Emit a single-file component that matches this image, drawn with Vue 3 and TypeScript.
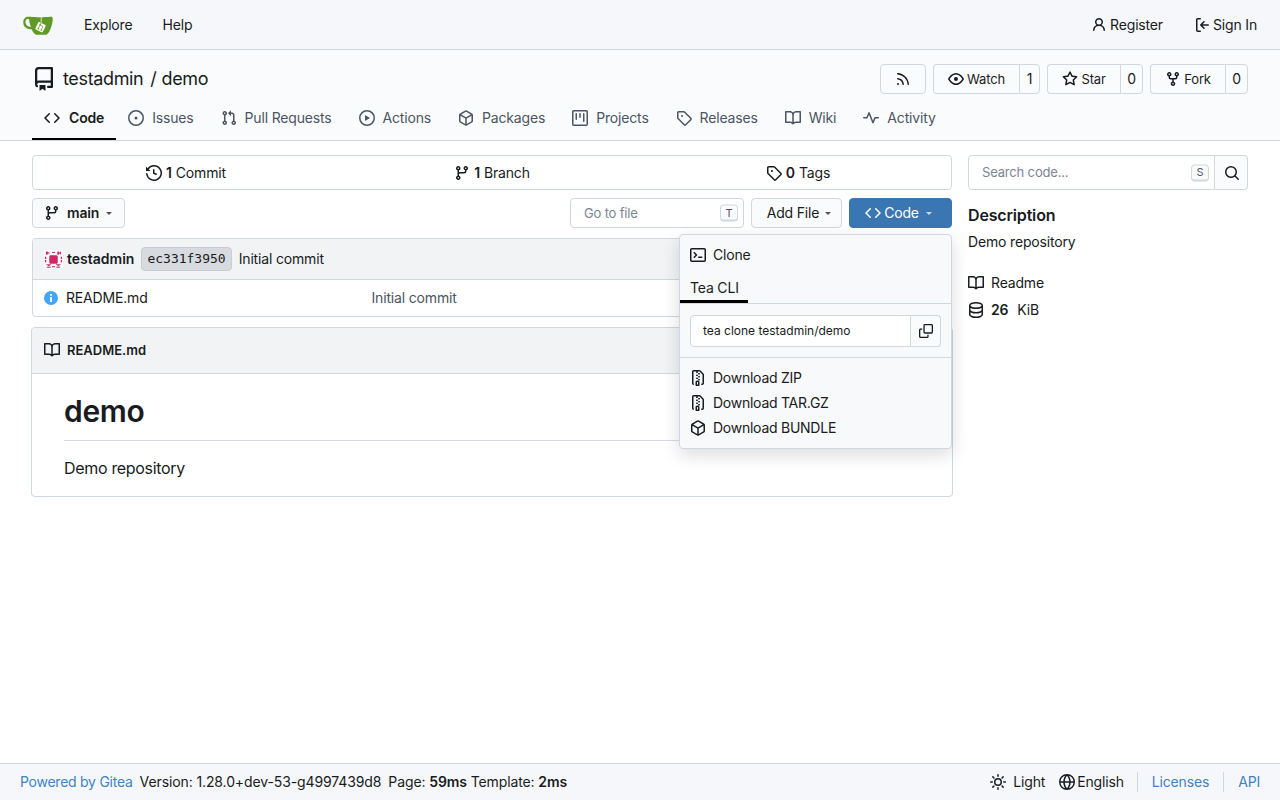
<script setup lang="ts">
import { h } from 'vue';

const icons: Record<string, string> = {
  code: 'm11.28 3.22 4.25 4.25a.75.75 0 0 1 0 1.06l-4.25 4.25a.749.749 0 0 1-1.275-.326.749.749 0 0 1 .215-.734L13.94 8l-3.72-3.72a.749.749 0 0 1 .326-1.275.749.749 0 0 1 .734.215Zm-6.56 0a.751.751 0 0 1 1.042.018.751.751 0 0 1 .018 1.042L2.06 8l3.72 3.72a.749.749 0 0 1-.326 1.275.749.749 0 0 1-.734-.215L.47 8.53a.75.75 0 0 1 0-1.06Z',
  repo: 'M2 2.5A2.5 2.5 0 0 1 4.5 0h8.75a.75.75 0 0 1 .75.75v12.5a.75.75 0 0 1-.75.75h-2.5a.75.75 0 0 1 0-1.5h1.75v-2h-8a1 1 0 0 0-.714 1.7.75.75 0 1 1-1.072 1.05A2.495 2.495 0 0 1 2 11.5Zm10.5-1h-8a1 1 0 0 0-1 1v6.708A2.486 2.486 0 0 1 4.5 9h8ZM5 12.25a.25.25 0 0 1 .25-.25h3.5a.25.25 0 0 1 .25.25v3.25a.25.25 0 0 1-.4.2l-1.45-1.087a.249.249 0 0 0-.3 0L5.4 15.7a.25.25 0 0 1-.4-.2Z',
  issue: 'M8 9.5a1.5 1.5 0 1 0 0-3 1.5 1.5 0 0 0 0 3Z M8 0a8 8 0 1 1 0 16A8 8 0 0 1 8 0ZM1.5 8a6.5 6.5 0 1 0 13 0 6.5 6.5 0 0 0-13 0Z',
  pull: 'M1.5 3.25a2.25 2.25 0 1 1 3 2.122v5.256a2.251 2.251 0 1 1-1.5 0V5.372A2.25 2.25 0 0 1 1.5 3.25Zm5.677-.177L9.573.677A.25.25 0 0 1 10 .854V2.5h1A2.5 2.5 0 0 1 13.5 5v5.628a2.251 2.251 0 1 1-1.5 0V5a1 1 0 0 0-1-1h-1v1.646a.25.25 0 0 1-.427.177L7.177 3.427a.25.25 0 0 1 0-.354ZM3.75 2.5a.75.75 0 1 0 0 1.5.75.75 0 0 0 0-1.5Zm0 9.5a.75.75 0 1 0 0 1.5.75.75 0 0 0 0-1.5Zm8.25.75a.75.75 0 1 0 1.5 0 .75.75 0 0 0-1.5 0Z',
  play: 'M8 0a8 8 0 1 1 0 16A8 8 0 0 1 8 0ZM1.5 8a6.5 6.5 0 1 0 13 0 6.5 6.5 0 0 0-13 0Zm4.879-2.773 4.264 2.559a.25.25 0 0 1 0 .428l-4.264 2.559A.25.25 0 0 1 6 10.559V5.442a.25.25 0 0 1 .379-.215Z',
  package: 'm8.878.392 5.25 3.045c.54.314.872.89.872 1.514v6.098a1.75 1.75 0 0 1-.872 1.514l-5.25 3.045a1.75 1.75 0 0 1-1.756 0l-5.25-3.045A1.75 1.75 0 0 1 1 11.049V4.951c0-.624.332-1.201.872-1.514L7.122.392a1.75 1.75 0 0 1 1.756 0ZM7.875 1.69l-4.63 2.685L8 7.133l4.755-2.758-4.63-2.685a.248.248 0 0 0-.25 0ZM2.5 5.677v5.372c0 .09.047.171.125.216l4.625 2.683V8.432Zm6.25 8.271 4.625-2.683a.25.25 0 0 0 .125-.216V5.677L8.75 8.432Z',
  project: 'M0 1.75C0 .784.784 0 1.75 0h12.5C15.216 0 16 .784 16 1.75v12.5A1.75 1.75 0 0 1 14.25 16H1.75A1.75 1.75 0 0 1 0 14.25ZM1.5 1.75v12.5c0 .138.112.25.25.25h12.5a.25.25 0 0 0 .25-.25V1.75a.25.25 0 0 0-.25-.25H1.75a.25.25 0 0 0-.25.25ZM11.75 3a.75.75 0 0 1 .75.75v7.5a.75.75 0 0 1-1.5 0v-7.5a.75.75 0 0 1 .75-.75Zm-8.25.75a.75.75 0 0 1 1.5 0v5.5a.75.75 0 0 1-1.5 0ZM8 3a.75.75 0 0 1 .75.75v3.5a.75.75 0 0 1-1.5 0v-3.5A.75.75 0 0 1 8 3Z',
  tag: 'M1 7.775V2.75C1 1.784 1.784 1 2.75 1h5.025c.464 0 .91.184 1.238.513l6.25 6.25a1.75 1.75 0 0 1 0 2.474l-5.026 5.026a1.75 1.75 0 0 1-2.474 0l-6.25-6.25A1.752 1.752 0 0 1 1 7.775Zm1.5 0c0 .066.026.13.073.177l6.25 6.25a.25.25 0 0 0 .354 0l5.025-5.025a.25.25 0 0 0 0-.354l-6.25-6.25a.25.25 0 0 0-.177-.073H2.75a.25.25 0 0 0-.25.25ZM6 5a1 1 0 1 1 0 2 1 1 0 0 1 0-2Z',
  book: 'M0 1.75A.75.75 0 0 1 .75 1h4.253c1.227 0 2.317.59 3 1.501A3.743 3.743 0 0 1 11.006 1h4.245a.75.75 0 0 1 .75.75v10.5a.75.75 0 0 1-.75.75h-4.507a2.25 2.25 0 0 0-1.591.659l-.622.621a.75.75 0 0 1-1.06 0l-.622-.621A2.25 2.25 0 0 0 5.258 13H.75a.75.75 0 0 1-.75-.75Zm7.251 10.324.004-5.073-.002-2.253A2.25 2.25 0 0 0 5.003 2.5H1.5v9h3.757a3.75 3.75 0 0 1 1.994.574ZM8.755 4.75l-.004 7.322a3.752 3.752 0 0 1 1.992-.572H14.5v-9h-3.495a2.25 2.25 0 0 0-2.25 2.25Z',
  pulse: 'M6 2c.306 0 .582.187.696.471L10 10.731l1.304-3.26A.751.751 0 0 1 12 7h3.25a.75.75 0 0 1 0 1.5h-2.742l-1.812 4.528a.751.751 0 0 1-1.392 0L6 4.77 4.696 8.03A.75.75 0 0 1 4 8.5H.75a.75.75 0 0 1 0-1.5h2.742l1.812-4.529A.751.751 0 0 1 6 2Z',
  rss: 'M2.002 2.725a.75.75 0 0 1 .797-.699C8.79 2.42 13.58 7.21 13.974 13.201a.75.75 0 0 1-1.497.098 10.502 10.502 0 0 0-9.776-9.776.747.747 0 0 1-.7-.798ZM2.84 7.05h-.002a7.002 7.002 0 0 1 6.113 6.111.75.75 0 0 1-1.49.178 5.503 5.503 0 0 0-4.8-4.8.75.75 0 0 1 .179-1.489ZM2 13a1 1 0 1 1 2 0 1 1 0 0 1-2 0Z',
  eye: 'M8 2c1.981 0 3.671.992 4.933 2.078 1.27 1.091 2.187 2.345 2.637 3.023a1.62 1.62 0 0 1 0 1.798c-.45.678-1.367 1.932-2.637 3.023C11.67 13.008 9.981 14 8 14c-1.981 0-3.671-.992-4.933-2.078C1.797 10.83.88 9.576.43 8.898a1.62 1.62 0 0 1 0-1.798c.45-.677 1.367-1.931 2.637-3.022C4.33 2.992 6.019 2 8 2ZM1.679 7.932a.12.12 0 0 0 0 .136c.411.622 1.241 1.75 2.366 2.717C5.176 11.758 6.527 12.5 8 12.5c1.473 0 2.825-.742 3.955-1.715 1.124-.967 1.954-2.096 2.366-2.717a.12.12 0 0 0 0-.136c-.412-.621-1.242-1.75-2.366-2.717C10.824 4.242 9.473 3.5 8 3.5c-1.473 0-2.825.742-3.955 1.715-1.124.967-1.954 2.096-2.366 2.717ZM8 10a2 2 0 1 1-.001-3.999A2 2 0 0 1 8 10Z',
  star: 'M8 .25a.75.75 0 0 1 .673.418l1.882 3.815 4.21.612a.75.75 0 0 1 .416 1.279l-3.046 2.97.719 4.192a.751.751 0 0 1-1.088.791L8 12.347l-3.766 1.98a.75.75 0 0 1-1.088-.79l.72-4.194L.818 6.374a.75.75 0 0 1 .416-1.28l4.21-.611L7.327.668A.75.75 0 0 1 8 .25Zm0 2.445L6.615 5.5a.75.75 0 0 1-.564.41l-3.097.45 2.24 2.184a.75.75 0 0 1 .216.664l-.528 3.084 2.769-1.456a.75.75 0 0 1 .698 0l2.77 1.456-.53-3.084a.75.75 0 0 1 .216-.664l2.24-2.183-3.096-.45a.75.75 0 0 1-.564-.41L8 2.694Z',
  fork: 'M5 5.372v.878c0 .414.336.75.75.75h4.5a.75.75 0 0 0 .75-.75v-.878a2.25 2.25 0 1 1 1.5 0v.878a2.25 2.25 0 0 1-2.25 2.25h-1.5v2.128a2.251 2.251 0 1 1-1.5 0V8.5h-1.5A2.25 2.25 0 0 1 3.5 6.25v-.878a2.25 2.25 0 1 1 1.5 0ZM5 3.25a.75.75 0 1 0-1.5 0 .75.75 0 0 0 1.5 0Zm6.75.75a.75.75 0 1 0 0-1.5.75.75 0 0 0 0 1.5Zm-3 8.75a.75.75 0 1 0-1.5 0 .75.75 0 0 0 1.5 0Z',
  person: 'M10.561 8.073a6.005 6.005 0 0 1 3.432 5.142.75.75 0 1 1-1.498.07 4.5 4.5 0 0 0-8.99 0 .75.75 0 0 1-1.498-.07 6.004 6.004 0 0 1 3.431-5.142 3.999 3.999 0 1 1 5.123 0ZM10.5 5a2.5 2.5 0 1 0-5 0 2.5 2.5 0 0 0 5 0Z',
  signin: 'M2 2.75C2 1.784 2.784 1 3.75 1h2.5a.75.75 0 0 1 0 1.5h-2.5a.25.25 0 0 0-.25.25v10.5c0 .138.112.25.25.25h2.5a.75.75 0 0 1 0 1.5h-2.5A1.75 1.75 0 0 1 2 13.25Zm6.56 4.5h5.69a.75.75 0 0 1 0 1.5H8.56l1.97 1.97a.749.749 0 0 1-.326 1.275.749.749 0 0 1-.734-.215L6.22 8.53a.75.75 0 0 1 0-1.06l3.25-3.25a.749.749 0 0 1 1.275.326.749.749 0 0 1-.215.734Z',
  history: 'm.427 1.927 1.215 1.215a8.002 8.002 0 1 1-1.6 5.685.75.75 0 1 1 1.493-.154 6.5 6.5 0 1 0 1.18-4.458l1.358 1.358A.25.25 0 0 1 3.896 6H.25A.25.25 0 0 1 0 5.75V2.104a.25.25 0 0 1 .427-.177ZM7.75 4a.75.75 0 0 1 .75.75v2.992l2.028.812a.75.75 0 0 1-.557 1.392l-2.5-1A.751.751 0 0 1 7 8.25v-3.5A.75.75 0 0 1 7.75 4Z',
  branch: 'M9.5 3.25a2.25 2.25 0 1 1 3 2.122V6A2.5 2.5 0 0 1 10 8.5H6a1 1 0 0 0-1 1v1.128a2.251 2.251 0 1 1-1.5 0V5.372a2.25 2.25 0 1 1 1.5 0v1.836A2.493 2.493 0 0 1 6 7h4a1 1 0 0 0 1-1v-.628A2.25 2.25 0 0 1 9.5 3.25Zm-6 0a.75.75 0 1 0 1.5 0 .75.75 0 0 0-1.5 0Zm8.25-.75a.75.75 0 1 0 0 1.5.75.75 0 0 0 0-1.5ZM4.25 12a.75.75 0 1 0 0 1.5.75.75 0 0 0 0-1.5Z',
  terminal: 'M0 2.75C0 1.784.784 1 1.75 1h12.5c.966 0 1.75.784 1.75 1.75v10.5A1.75 1.75 0 0 1 14.25 15H1.75A1.75 1.75 0 0 1 0 13.25Zm1.75-.25a.25.25 0 0 0-.25.25v10.5c0 .138.112.25.25.25h12.5a.25.25 0 0 0 .25-.25V2.75a.25.25 0 0 0-.25-.25ZM7.25 8a.749.749 0 0 1-.22.53l-2.25 2.25a.749.749 0 0 1-1.275-.326.749.749 0 0 1 .215-.734L5.44 8 3.72 6.28a.749.749 0 0 1 .326-1.275.749.749 0 0 1 .734.215l2.25 2.25c.141.14.22.331.22.53Zm1.5 1.5h3a.75.75 0 0 1 0 1.5h-3a.75.75 0 0 1 0-1.5Z',
  copy: 'M0 6.75C0 5.784.784 5 1.75 5h1.5a.75.75 0 0 1 0 1.5h-1.5a.25.25 0 0 0-.25.25v7.5c0 .138.112.25.25.25h7.5a.25.25 0 0 0 .25-.25v-1.5a.75.75 0 0 1 1.5 0v1.5A1.75 1.75 0 0 1 9.25 16h-7.5A1.75 1.75 0 0 1 0 14.25Z M5 1.75C5 .784 5.784 0 6.75 0h7.5C15.216 0 16 .784 16 1.75v7.5A1.75 1.75 0 0 1 14.25 11h-7.5A1.75 1.75 0 0 1 5 9.25Zm1.75-.25a.25.25 0 0 0-.25.25v7.5c0 .138.112.25.25.25h7.5a.25.25 0 0 0 .25-.25v-7.5a.25.25 0 0 0-.25-.25Z',
  zip: 'M3.5 1.75v11.5c0 .09.048.173.126.217a.75.75 0 0 1-.752 1.298A1.748 1.748 0 0 1 2 13.25V1.75C2 .784 2.784 0 3.75 0h5.586c.464 0 .909.185 1.237.513l2.914 2.914c.329.328.513.773.513 1.237v8.586A1.75 1.75 0 0 1 12.25 15h-.5a.75.75 0 0 1 0-1.5h.5a.25.25 0 0 0 .25-.25V4.664a.25.25 0 0 0-.073-.177L9.513 1.573a.25.25 0 0 0-.177-.073H7.25a.75.75 0 0 1 0 1.5h-.5a.75.75 0 0 1 0-1.5h-3a.25.25 0 0 0-.25.25Zm3.75 8.75h.5c.966 0 1.75.784 1.75 1.75v3a.75.75 0 0 1-.75.75h-2.5a.75.75 0 0 1-.75-.75v-3c0-.966.784-1.75 1.75-1.75ZM6 5.25a.75.75 0 0 1 .75-.75h.5a.75.75 0 0 1 0 1.5h-.5A.75.75 0 0 1 6 5.25Zm.75 2.25h.5a.75.75 0 0 1 0 1.5h-.5a.75.75 0 0 1 0-1.5ZM8 6.75A.75.75 0 0 1 8.75 6h.5a.75.75 0 0 1 0 1.5h-.5A.75.75 0 0 1 8 6.75ZM8.75 3h.5a.75.75 0 0 1 0 1.5h-.5a.75.75 0 0 1 0-1.5ZM8 9.75A.75.75 0 0 1 8.75 9h.5a.75.75 0 0 1 0 1.5h-.5A.75.75 0 0 1 8 9.75Zm-1 2.5v2.25h1v-2.25a.25.25 0 0 0-.25-.25h-.5a.25.25 0 0 0-.25.25Z',
  search: 'M10.68 11.74a6 6 0 0 1-7.922-8.982 6 6 0 0 1 8.982 7.922l3.04 3.04a.749.749 0 0 1-.326 1.275.749.749 0 0 1-.734-.215ZM11.5 7a4.499 4.499 0 1 0-8.997 0A4.499 4.499 0 0 0 11.5 7Z',
  database: 'M1 3.5c0-.626.292-1.165.7-1.59.406-.422.956-.767 1.579-1.041C4.525.32 6.195 0 8 0c1.805 0 3.475.32 4.722.869.622.274 1.172.62 1.578 1.04.408.426.7.965.7 1.591v9c0 .626-.292 1.165-.7 1.59-.406.422-.956.767-1.579 1.041C11.476 15.68 9.806 16 8 16c-1.805 0-3.475-.32-4.721-.869-.623-.274-1.173-.62-1.579-1.04-.408-.426-.7-.965-.7-1.591Zm1.5 0c0 .133.058.318.282.551.227.237.591.483 1.101.707C4.898 5.205 6.353 5.5 8 5.5c1.646 0 3.101-.295 4.118-.742.508-.224.873-.471 1.1-.708.224-.232.282-.417.282-.55 0-.133-.058-.318-.282-.551-.227-.237-.591-.483-1.101-.707C11.102 1.795 9.647 1.5 8 1.5c-1.646 0-3.101.295-4.118.742-.508.224-.873.471-1.1.708-.224.232-.282.417-.282.55Zm0 4.5c0 .133.058.318.282.551.227.237.591.483 1.101.707C4.898 9.705 6.353 10 8 10c1.646 0 3.101-.295 4.118-.742.508-.224.873-.471 1.1-.708.224-.232.282-.417.282-.55V5.724c-.241.15-.503.286-.778.407C11.475 6.68 9.805 7 8 7c-1.805 0-3.475-.32-4.721-.869a6.15 6.15 0 0 1-.779-.407Zm0 2.225V12.5c0 .133.058.318.282.55.227.237.592.484 1.1.708 1.016.447 2.471.742 4.118.742 1.647 0 3.102-.295 4.117-.742.51-.224.874-.47 1.101-.707.224-.233.282-.418.282-.551v-2.275c-.241.15-.503.285-.778.406-1.247.549-2.917.869-4.722.869-1.805 0-3.475-.32-4.721-.869a6.327 6.327 0 0 1-.779-.406Z',
  sun: 'M8 12a4 4 0 1 1 0-8 4 4 0 0 1 0 8Zm0-1.5a2.5 2.5 0 1 0 0-5 2.5 2.5 0 0 0 0 5Zm5.657-8.157a.75.75 0 0 1 0 1.061l-1.061 1.06a.749.749 0 0 1-1.275-.326.749.749 0 0 1 .215-.734l1.06-1.06a.75.75 0 0 1 1.06 0Zm-9.193 9.193a.75.75 0 0 1 0 1.06l-1.06 1.061a.75.75 0 1 1-1.061-1.06l1.06-1.061a.75.75 0 0 1 1.061 0ZM8 0a.75.75 0 0 1 .75.75v1.5a.75.75 0 0 1-1.5 0V.75A.75.75 0 0 1 8 0ZM3 8a.75.75 0 0 1-.75.75H.75a.75.75 0 0 1 0-1.5h1.5A.75.75 0 0 1 3 8Zm13 0a.75.75 0 0 1-.75.75h-1.5a.75.75 0 0 1 0-1.5h1.5A.75.75 0 0 1 16 8Zm-8 5a.75.75 0 0 1 .75.75v1.5a.75.75 0 0 1-1.5 0v-1.5A.75.75 0 0 1 8 13Zm3.536-1.464a.75.75 0 0 1 1.06 0l1.061 1.06a.75.75 0 0 1-1.06 1.061l-1.061-1.06a.75.75 0 0 1 0-1.061ZM2.343 2.343a.75.75 0 0 1 1.061 0l1.06 1.061a.751.751 0 0 1-.018 1.042.751.751 0 0 1-1.042.018l-1.06-1.06a.75.75 0 0 1 0-1.06Z',
  globe: 'M8 0a8 8 0 1 1 0 16A8 8 0 0 1 8 0ZM5.78 8.75a9.64 9.64 0 0 0 1.363 4.177c.255.426.542.832.857 1.215.245-.296.551-.705.857-1.215A9.64 9.64 0 0 0 10.22 8.75Zm4.44-1.5a9.64 9.64 0 0 0-1.363-4.177c-.307-.51-.612-.919-.857-1.215a9.927 9.927 0 0 0-.857 1.215A9.64 9.64 0 0 0 5.78 7.25Zm-5.944 1.5H1.543a6.507 6.507 0 0 0 4.666 5.5c-.123-.181-.24-.365-.352-.552-.715-1.192-1.437-2.874-1.581-4.948Zm-2.733-1.5h2.733c.144-2.074.866-3.756 1.58-4.948.12-.197.237-.381.353-.552a6.507 6.507 0 0 0-4.666 5.5Zm10.181 1.5c-.144 2.074-.866 3.756-1.58 4.948-.12.197-.237.381-.353.552a6.507 6.507 0 0 0 4.666-5.5Zm2.733-1.5a6.507 6.507 0 0 0-4.666-5.5c.123.181.24.365.353.552.714 1.192 1.436 2.874 1.58 4.948Z',
};

const Oct = (props: { name: string; size?: number }) =>
  h(
    'svg',
    { viewBox: '0 0 16 16', width: props.size ?? 16, height: props.size ?? 16, fill: 'currentColor', style: 'flex:none;display:block' },
    [h('path', { d: icons[props.name], 'fill-rule': 'evenodd' })],
  );
Oct.props = ['name', 'size'];

const tabs = [
  { icon: 'code', label: 'Code', active: true },
  { icon: 'issue', label: 'Issues' },
  { icon: 'pull', label: 'Pull Requests' },
  { icon: 'play', label: 'Actions' },
  { icon: 'package', label: 'Packages' },
  { icon: 'project', label: 'Projects' },
  { icon: 'tag', label: 'Releases' },
  { icon: 'book', label: 'Wiki' },
  { icon: 'pulse', label: 'Activity' },
];

const repoButtons = [
  { icon: 'eye', label: 'Watch', count: 1 },
  { icon: 'star', label: 'Star', count: 0 },
  { icon: 'fork', label: 'Fork', count: 0 },
];

const stats = [
  { icon: 'history', num: 1, label: 'Commit' },
  { icon: 'branch', num: 1, label: 'Branch' },
  { icon: 'tag', num: 0, label: 'Tags' },
];

const downloads = [
  { icon: 'zip', label: 'Download ZIP' },
  { icon: 'zip', label: 'Download TAR.GZ' },
  { icon: 'package', label: 'Download BUNDLE' },
];
</script>

<template>
  <div class="page">
    <nav class="navbar">
      <div class="nav-left">
        <svg class="logo" viewBox="0 0 640 640" width="30" height="30">
          <path fill="#fff" d="m395.9 484.2-126.9-61c-12.5-6-17.9-21.2-11.8-33.8l61-126.9c6-12.5 21.2-17.9 33.8-11.8 17.2 8.3 27.1 13 27.1 13l-.1-109.2 16.7-.1.1 117.1s57.4 24.2 83.1 40.1c3.7 2.3 10.2 6.8 12.9 14.4 2.1 6.1 2 13.1-1 19.3l-61 126.9c-6.2 12.7-21.4 18-33.9 12" />
          <path fill="#609926" d="M622.7 149.8c-4.1-4.1-9.6-4-9.6-4s-117.2 6.6-177.9 8c-13.3.3-26.5.6-39.6.7v117.2c-5.5-2.6-11.1-5.3-16.6-7.9 0-36.4-.1-109.2-.1-109.2-29 .4-89.2-2.2-89.2-2.2s-141.4-7.1-156.8-8.5c-9.8-.6-22.5-2.1-39 1.5-8.7 1.8-33.5 7.4-53.8 26.9C-4.9 212.4 6.6 276.2 8 285.8c1.7 11.7 6.9 44.2 31.7 72.5 45.8 56.1 144.4 54.8 144.4 54.8s12.1 28.9 30.6 55.5c25 33.1 50.7 58.9 75.7 62 63 0 188.9-.1 188.9-.1s12 .1 28.3-10.3c14-8.5 26.5-23.4 26.5-23.4S547 483 565 451.5c5.5-9.7 10.1-19.1 14.1-28 0 0 55.2-117.1 55.2-231.1-1.1-34.5-9.6-40.6-11.6-42.6M125.6 353.9c-25.9-8.5-36.9-18.7-36.9-18.7S69.6 321.8 60 295.4c-16.5-44.2-1.4-71.2-1.4-71.2s8.4-22.5 38.5-30c13.8-3.7 31-3.1 31-3.1s7.1 59.4 15.7 94.2c7.2 29.2 24.8 77.7 24.8 77.7s-26.1-3.1-43-9.1m300.3 107.6s-6.1 14.5-19.6 15.4c-5.8.4-10.3-1.2-10.3-1.2s-.3-.1-5.3-2.1l-112.9-55s-10.9-5.7-12.8-15.6c-2.2-8.1 2.7-18.1 2.7-18.1L322 273s4.8-9.7 12.2-13c.6-.3 2.3-1 4.5-1.5 8.1-2.1 18 2.8 18 2.8L467.4 315s12.6 5.7 15.3 16.2c1.9 7.4-.5 14-1.8 17.2-6.3 15.4-55 113.1-55 113.1" />
          <path fill="#609926" d="M326.8 380.1c-8.2.1-15.4 5.8-17.3 13.8s2 16.3 9.1 20c7.7 4 17.5 1.8 22.7-5.4 5.1-7.1 4.3-16.9-1.8-23.1l24-49.1c1.5.1 3.7.2 6.2-.5 4.1-.9 7.1-3.6 7.1-3.6 4.2 1.8 8.6 3.8 13.2 6.1 4.8 2.4 9.3 4.9 13.4 7.3.9.5 1.8 1.1 2.8 1.9 1.6 1.3 3.4 3.1 4.7 5.5 1.9 5.5-1.9 14.9-1.9 14.9-2.3 7.6-18.4 40.6-18.4 40.6-8.1-.2-15.3 5-17.7 12.5-2.6 8.1 1.1 17.3 8.9 21.3s17.4 1.7 22.5-5.3c5-6.8 4.6-16.3-1.1-22.6 1.9-3.7 3.7-7.4 5.6-11.3 5-10.4 13.5-30.4 13.5-30.4.9-1.7 5.7-10.3 2.7-21.3-2.5-11.4-12.6-16.7-12.6-16.7-12.2-7.9-29.2-15.2-29.2-15.2s0-4.1-1.1-7.1c-1.1-3.1-2.8-5.1-3.9-6.3 4.7-9.7 9.4-19.3 14.1-29-4.1-2-8.1-4-12.2-6.1-4.8 9.8-9.7 19.7-14.5 29.5-6.7-.1-12.9 3.5-16.1 9.4-3.4 6.3-2.7 14.1 1.9 19.8z" />
        </svg>
        <a class="nav-link explore">Explore</a>
        <a class="nav-link help">Help</a>
      </div>
      <div class="nav-right">
        <a class="nav-link"><Oct name="person" />Register</a>
        <a class="nav-link"><Oct name="signin" />Sign In</a>
      </div>
    </nav>

    <header class="repo-header">
      <div class="repo-title-row">
        <div class="repo-title">
          <Oct name="repo" :size="24" />
          <span>testadmin</span><span class="slash">/</span><span>demo</span>
        </div>
        <div class="repo-buttons">
          <button class="btn rss"><Oct name="rss" /></button>
          <div v-for="b in repoButtons" :key="b.label" class="labeled">
            <button class="btn labeled-main"><Oct :name="b.icon" />{{ b.label }}</button>
            <span class="labeled-count">{{ b.count }}</span>
          </div>
        </div>
      </div>
      <div class="tabs">
        <a v-for="t in tabs" :key="t.label" class="tab" :class="{ 'tab--active': t.active }">
          <Oct :name="t.icon" />{{ t.label }}
        </a>
      </div>
    </header>

    <main class="content">
      <div class="main-col">
        <div class="stats">
          <div v-for="s in stats" :key="s.label" class="stat">
            <Oct :name="s.icon" /><b>{{ s.num }}</b><span>{{ s.label }}</span>
          </div>
        </div>

        <div class="branch-row">
          <button class="btn branch-btn"><Oct name="branch" /><b>main</b><i class="caret" /></button>
          <div class="branch-actions">
            <label class="goto">
              <input placeholder="Go to file" />
              <kbd>T</kbd>
            </label>
            <button class="btn addfile">Add File<i class="caret" /></button>
            <div class="code-wrap">
              <button class="btn code-btn"><Oct name="code" />Code<i class="caret" /></button>
              <div class="clone-menu">
                <div class="clone-title"><Oct name="terminal" />Clone</div>
                <div class="clone-tabs"><span class="clone-tab">Tea CLI</span></div>
                <div class="clone-input">
                  <input value="tea clone testadmin/demo" />
                  <button><Oct name="copy" :size="14" /></button>
                </div>
                <div class="clone-downloads">
                  <a v-for="d in downloads" :key="d.label"><Oct :name="d.icon" />{{ d.label }}</a>
                </div>
              </div>
            </div>
          </div>
        </div>

        <div class="files">
          <div class="commit-row">
            <svg class="avatar" viewBox="0 0 20 20" width="19" height="19">
              <rect width="20" height="20" rx="3" fill="#fff" />
              <g fill="#d1295f">
                <path d="M6 5.5h8v1h.5v7H14v1H6v-1h-.5v-7H6Z" />
                <path d="M2 1.5h1.5l1 1.5 1-1.5V5l-1-1.5-1 1.5H2ZM14 1.5h1.5l1 1.5 1-1.5h.5V5h-.5l-1-1.5-1 1.5H14Z" />
                <path d="M2 15h6l-3 2.2ZM12 15h6l-3 2.2Z" />
                <rect x="3" y="17.5" width="4" height="1.2" />
                <rect x="13" y="17.5" width="4" height="1.2" />
                <rect x="1" y="7" width="1.4" height="2.5" />
                <rect x="17.6" y="7" width="1.4" height="2.5" />
                <rect x="1" y="10.5" width="1.4" height="2.5" />
                <rect x="17.6" y="10.5" width="1.4" height="2.5" />
                <rect x="8.5" y="2" width="3" height="1.2" />
                <rect x="8.5" y="17" width="3" height="1.2" />
              </g>
            </svg>
            <b class="commit-author">testadmin</b>
            <span class="sha">ec331f3950</span>
            <span>Initial commit</span>
          </div>
          <div class="file-row">
            <svg class="info" viewBox="0 0 16 16" width="16" height="16">
              <circle cx="8" cy="8" r="7" fill="#42a5f5" />
              <rect x="7.1" y="7" width="1.8" height="5" fill="#fff" />
              <rect x="7.1" y="4" width="1.8" height="1.8" fill="#fff" />
            </svg>
            <span class="file-name">README.md</span>
            <span class="file-msg">Initial commit</span>
          </div>
        </div>

        <section class="readme">
          <div class="readme-head"><Oct name="book" /><b>README.md</b></div>
          <div class="readme-body">
            <h1>demo</h1>
            <p>Demo repository</p>
          </div>
        </section>
      </div>

      <aside class="side">
        <div class="search">
          <label class="search-field">
            <input placeholder="Search code..." />
            <kbd>S</kbd>
          </label>
          <button><Oct name="search" /></button>
        </div>
        <h2>Description</h2>
        <div class="desc">Demo repository</div>
        <div class="side-item readme-link"><Oct name="book" />Readme</div>
        <div class="side-item"><Oct name="database" /><b>26</b><span class="kib">KiB</span></div>
      </aside>
    </main>

    <footer class="footer">
      <div class="foot-left">
        <a class="link powered">Powered by Gitea</a>
        <span>Version: 1.28.0+dev-53-g4997439d8</span>
        <span>Page: <b>59ms</b> Template: <b>2ms</b></span>
      </div>
      <div class="foot-right">
        <span class="foot-item"><Oct name="sun" />Light</span>
        <span class="foot-item english"><Oct name="globe" />English</span>
        <a class="link sep licenses">Licenses</a>
        <a class="link sep">API</a>
      </div>
    </footer>
  </div>
</template>

<style>
html,
body {
  margin: 0;
  background: #fff;
}
</style>

<style scoped>
.page {
  --border: #d0d7de;
  --text: #181c21;
  --muted: #4b5563;
  min-height: 100vh;
  display: flex;
  flex-direction: column;
  box-sizing: border-box;
  font-family: Inter, 'Liberation Sans', sans-serif;
  font-size: 14px;
  line-height: 20px;
  letter-spacing: -0.012em;
  color: var(--text);
}
button,
input {
  font: inherit;
  letter-spacing: inherit;
  color: inherit;
  margin: 0;
}
b {
  font-weight: 600;
}

.navbar {
  height: 49px;
  flex: none;
  display: flex;
  align-items: center;
  justify-content: space-between;
  padding: 0 23px;
  background: #f6f7fa;
  border-bottom: 1px solid var(--border);
}
.nav-left,
.nav-right {
  display: flex;
  align-items: center;
}
.logo {
  display: block;
}
.nav-link {
  display: flex;
  align-items: center;
  gap: 3px;
}
.explore {
  margin-left: 31px;
}
.help {
  margin-left: 30px;
}
.nav-right {
  gap: 31px;
}

.repo-header {
  flex: none;
  background: #fafbfc;
  border-bottom: 1px solid var(--border);
  padding: 14px 32px 0;
}
.repo-title-row {
  display: flex;
  align-items: center;
  justify-content: space-between;
  height: 30px;
}
.repo-title {
  display: flex;
  align-items: center;
  font-size: 18px;
  letter-spacing: -0.02em;
  gap: 7px;
}
.slash {
  margin-right: -2px;
}
.repo-buttons {
  display: flex;
  gap: 7px;
}
.btn {
  height: 30px;
  box-sizing: border-box;
  display: inline-flex;
  align-items: center;
  justify-content: center;
  background: #fafbfc;
  border: 1px solid var(--border);
  border-radius: 4px;
  padding: 0;
  font-size: 13px;
}
.rss {
  width: 46px;
}
.labeled {
  display: flex;
  height: 30px;
}
.labeled-main {
  gap: 3px;
  padding: 0 14.5px;
  border-radius: 4px 0 0 4px;
  border-right: 0;
}
.labeled:first-of-type .labeled-main {
  padding: 0 14px;
}
.labeled-count {
  display: flex;
  align-items: center;
  justify-content: center;
  min-width: 21px;
  padding: 0 6px;
  box-sizing: border-box;
  border: 1px solid var(--border);
  border-radius: 0 4px 4px 0;
  font-size: 14px;
}

.tabs {
  display: flex;
  margin-top: 10px;
  height: 36px;
}
.tab {
  display: flex;
  align-items: center;
  gap: 8px;
  padding: 0 12px 6px;
  color: var(--muted);
  margin-right: 3px;
  border-bottom: 2px solid transparent;
}
.tab--active {
  color: var(--text);
  font-weight: 600;
  border-bottom-color: #000;
  margin-right: 0;
  gap: 9px;
}

.content {
  width: 1216px;
  margin: 14px auto 0;
  display: flex;
  gap: 16px;
  align-items: flex-start;
}
.main-col {
  width: 920px;
  flex: none;
}
.stats {
  height: 35px;
  box-sizing: border-box;
  display: grid;
  grid-template-columns: repeat(3, 1fr);
  border: 1px solid var(--border);
  border-radius: 4px;
}
.stat {
  display: flex;
  align-items: center;
  justify-content: center;
  gap: 4px;
}

.branch-row {
  display: flex;
  justify-content: space-between;
  margin-top: 8px;
}
.branch-btn {
  width: 93px;
  font-size: 14px;
  gap: 7px;
  justify-content: flex-start;
  padding-left: 11px;
}
.caret {
  width: 0;
  height: 0;
  border: 3.5px solid transparent;
  border-top: 3.5px solid currentColor;
  border-bottom: 0;
  opacity: 0.75;
}
.branch-actions {
  display: flex;
  gap: 7px;
}
.goto {
  position: relative;
  display: block;
  width: 174px;
  height: 30px;
}
.goto input {
  width: 100%;
  height: 100%;
  box-sizing: border-box;
  border: 1px solid var(--border);
  border-radius: 4px;
  padding: 0 13px;
  font-size: 13px;
  background: #fff;
  outline: none;
}
input::placeholder {
  color: #7c8593;
  opacity: 1;
}
kbd {
  position: absolute;
  top: 50%;
  transform: translateY(-50%);
  right: 6px;
  width: 18px;
  height: 17px;
  box-sizing: border-box;
  display: flex;
  align-items: center;
  justify-content: center;
  border: 1px solid var(--border);
  border-bottom-width: 2px;
  border-radius: 4px;
  background: #fafbfc;
  font: 11px/1 Inter, 'Liberation Sans', sans-serif;
  color: #4b5563;
}
.addfile {
  width: 91px;
  font-size: 14px;
  gap: 6px;
  padding-left: 5px;
}
.code-wrap {
  position: relative;
}
.code-btn {
  width: 103px;
  gap: 3px;
  font-size: 14px;
  background: #3a76b1;
  border-color: #3a76b1;
  color: #fff;
  padding-right: 4px;
}
.code-btn .caret {
  margin-left: 4px;
}
.clone-menu {
  position: absolute;
  z-index: 5;
  top: 36px;
  right: 0;
  width: 273px;
  box-sizing: border-box;
  background: #f8f9fb;
  border: 1px solid var(--border);
  border-radius: 4px;
  box-shadow: 0 6px 18px rgba(0, 0, 0, 0.14);
}
.clone-title {
  display: flex;
  align-items: center;
  gap: 7px;
  padding: 10px 10px 0;
}
.clone-tabs {
  margin-top: 13px;
  height: 25px;
  border-bottom: 1px solid var(--border);
}
.clone-tab {
  display: block;
  width: 68px;
  height: 25px;
  padding-left: 10px;
  box-sizing: border-box;
  border-bottom: 3px solid #000;
}
.clone-input {
  display: flex;
  height: 32px;
  margin: 11px 10px 10px;
}
.clone-input input {
  flex: 1;
  min-width: 0;
  box-sizing: border-box;
  border: 1px solid var(--border);
  border-radius: 4px 0 0 4px;
  padding: 0 12px;
  font-size: 12px;
  letter-spacing: 0;
  background: #fff;
  outline: none;
}
.clone-input button {
  width: 30px;
  display: flex;
  align-items: center;
  justify-content: center;
  padding: 0;
  border: 1px solid var(--border);
  border-left: 0;
  border-radius: 0 4px 4px 0;
  background: #fafbfc;
}
.clone-downloads {
  border-top: 1px solid var(--border);
  padding: 10px 10px;
  display: flex;
  flex-direction: column;
  gap: 5px;
}
.clone-downloads a {
  display: flex;
  align-items: center;
  gap: 7px;
  letter-spacing: -0.018em;
}

.files {
  margin-top: 10px;
  border: 1px solid var(--border);
  border-radius: 4px;
}
.commit-row {
  height: 41px;
  box-sizing: border-box;
  display: flex;
  align-items: center;
  padding: 0 11px;
  background: #f1f3f5;
  border-bottom: 1px solid var(--border);
  border-radius: 4px 4px 0 0;
}
.avatar {
  flex: none;
  margin-right: 4px;
}
.commit-author {
  margin-right: 7px;
  letter-spacing: 0;
}
.sha {
  font-family: 'DejaVu Sans Mono', 'Liberation Mono', monospace;
  font-size: 13px;
  letter-spacing: 0;
  height: 24px;
  line-height: 22px;
  box-sizing: border-box;
  padding: 0 5px;
  background: #d7dbe0;
  border: 1px solid #c8cdd4;
  border-radius: 4px;
  margin-right: 7px;
}
.file-row {
  height: 36px;
  display: flex;
  align-items: center;
  padding: 0 11px;
}
.info {
  flex: none;
  margin-left: -1px;
}
.file-name {
  margin-left: 7px;
  width: 305.5px;
}
.file-msg {
  color: var(--muted);
}

.readme {
  margin: 10px -1px 0;
  border: 1px solid var(--border);
  border-radius: 4px;
}
.readme-head {
  height: 46px;
  box-sizing: border-box;
  display: flex;
  align-items: center;
  gap: 7px;
  padding: 0 12px 1px;
  background: #f1f3f5;
  border-bottom: 1px solid var(--border);
  border-radius: 4px 4px 0 0;
  font-size: 13px;
  letter-spacing: 0;
}
.readme-body {
  padding: 16px 32px;
  height: 122px;
  box-sizing: border-box;
  font-size: 16px;
  line-height: 24px;
  letter-spacing: -0.02em;
}
.readme-body h1 {
  margin: 2px 0 15px;
  padding-bottom: 10px;
  border-bottom: 1px solid #d7dbe2;
  font-size: 30px;
  line-height: 38px;
  font-weight: 600;
}
.readme-body p {
  margin: 0;
}

.side {
  width: 280px;
  flex: none;
}
.search {
  display: flex;
  height: 35px;
}
.search-field {
  position: relative;
  flex: 1;
  display: block;
}
.search-field input {
  width: 100%;
  height: 100%;
  box-sizing: border-box;
  border: 1px solid var(--border);
  border-radius: 4px 0 0 4px;
  padding: 0 13px 2px;
  font-size: 13px;
  background: #fff;
  outline: none;
}
.search button {
  width: 33px;
  display: flex;
  align-items: center;
  justify-content: center;
  padding: 0 0 0 1px;
  border: 1px solid var(--border);
  border-left: 0;
  border-radius: 0 4px 4px 0;
  background: #fafbfc;
}
.side h2 {
  margin: 15px 0 0;
  font-size: 16px;
  line-height: 20px;
  font-weight: 600;
}
.desc {
  margin-top: 7px;
}
.side-item {
  display: flex;
  align-items: center;
  gap: 7px;
  margin-top: 7px;
}
.readme-link {
  margin-top: 21px;
}
.kib {
  margin-left: 2px;
}

.footer {
  margin-top: auto;
  height: 36px;
  flex: none;
  display: flex;
  align-items: center;
  justify-content: space-between;
  padding: 0 20px;
  background: #f6f7fa;
  border-top: 1px solid var(--border);
}
.foot-left {
  display: flex;
  gap: 7px;
  letter-spacing: -0.008em;
}
.powered {
  letter-spacing: -0.018em;
}
.foot-right {
  display: flex;
  align-items: center;
}
.foot-item {
  display: flex;
  align-items: center;
  gap: 7px;
}
.english {
  gap: 2px;
  margin-left: 14px;
}
.link {
  color: #4183c4;
}
.sep {
  margin-left: 14px;
  padding-left: 14px;
  border-left: 1px solid var(--border);
}
.licenses {
  margin-left: 13px;
}
</style>
